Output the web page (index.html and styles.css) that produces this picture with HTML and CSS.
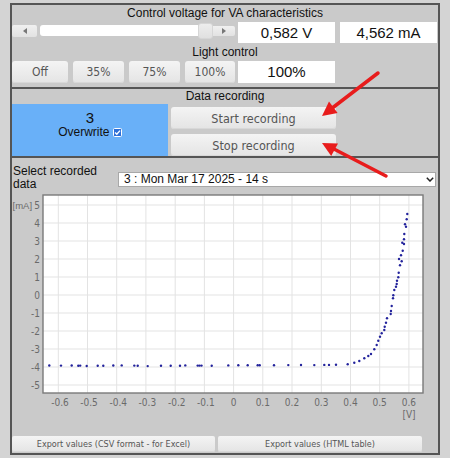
FILE: index.html
```html
<!DOCTYPE html>
<html>
<head>
<meta charset="utf-8">
<title>VA characteristics</title>
<link rel="stylesheet" href="styles.css">
</head>
<body>
<div class="app">
  <section class="panel p1">
    <div class="ptitle">Control voltage for VA characteristics</div>
    <div class="row r1">
      <div class="slider">
        <span class="sbtn sl"><svg width="4" height="6" viewBox="0 0 4 6"><path d="M4 0 L0 3 L4 6 Z" fill="#777"/></svg></span>
        <span class="track"></span>
        <span class="thumb"></span>
        <span class="sbtn sr"><svg width="4" height="6" viewBox="0 0 4 6"><path d="M0 0 L4 3 L0 6 Z" fill="#777"/></svg></span>
      </div>
      <div class="val v1">0,582 V</div>
      <div class="val v2">4,562 mA</div>
    </div>
    <div class="ptitle t2">Light control</div>
    <div class="row r2">
      <button class="btn lb w56">Off</button>
      <button class="btn lb w51">35%</button>
      <button class="btn lb w51">75%</button>
      <button class="btn lb w50">100%</button>
      <div class="val v3">100%</div>
    </div>
  </section>

  <section class="panel p2">
    <div class="ptitle t3">Data recording</div>
    <div class="rec">
      <div class="count">
        <div class="num">3</div>
        <div class="ow">Overwrite <svg class="cb" width="9" height="9" viewBox="0 0 9 9"><rect x="0.5" y="0.5" width="8" height="8" rx="1" fill="#2d6fd8" stroke="#ffffff"/><path d="M2 4.6 L3.8 6.3 L7 2.6" fill="none" stroke="#ffffff" stroke-width="1.4"/></svg></div>
      </div>
      <div class="recbtns">
        <button class="btn rb">Start recording</button>
        <button class="btn rb">Stop recording</button>
      </div>
    </div>
  </section>

  <section class="panel p3">
    <div class="selrow">
      <label class="sellabel" for="rec">Select recorded data</label>
      <div class="selwrap">
        <select id="rec" class="sel"><option>3 : Mon Mar 17 2025 - 14 s</option></select>
        <svg class="chev" width="8" height="5" viewBox="0 0 8 5"><path d="M0.8 0.8 L4 4 L7.2 0.8" fill="none" stroke="#222" stroke-width="1.5"/></svg>
      </div>
    </div>
    <svg class="chart" width="426" height="244" viewBox="12 191 426 244">
      <rect x="43" y="195" width="380" height="198" fill="#ffffff"/>
      <g stroke="#e3e3e3" stroke-width="1">
        <line x1="58.3" y1="195" x2="58.3" y2="393"/>
        <line x1="87.5" y1="195" x2="87.5" y2="393"/>
        <line x1="116.7" y1="195" x2="116.7" y2="393"/>
        <line x1="145.9" y1="195" x2="145.9" y2="393"/>
        <line x1="175.2" y1="195" x2="175.2" y2="393"/>
        <line x1="204.4" y1="195" x2="204.4" y2="393"/>
        <line x1="233.6" y1="195" x2="233.6" y2="393"/>
        <line x1="262.8" y1="195" x2="262.8" y2="393"/>
        <line x1="292" y1="195" x2="292" y2="393"/>
        <line x1="321.3" y1="195" x2="321.3" y2="393"/>
        <line x1="350.5" y1="195" x2="350.5" y2="393"/>
        <line x1="379.7" y1="195" x2="379.7" y2="393"/>
        <line x1="408.9" y1="195" x2="408.9" y2="393"/>
        <line x1="43" y1="205" x2="423" y2="205"/>
        <line x1="43" y1="223" x2="423" y2="223"/>
        <line x1="43" y1="241" x2="423" y2="241"/>
        <line x1="43" y1="259" x2="423" y2="259"/>
        <line x1="43" y1="277" x2="423" y2="277"/>
        <line x1="43" y1="295" x2="423" y2="295"/>
        <line x1="43" y1="313" x2="423" y2="313"/>
        <line x1="43" y1="331" x2="423" y2="331"/>
        <line x1="43" y1="349" x2="423" y2="349"/>
        <line x1="43" y1="367" x2="423" y2="367"/>
        <line x1="43" y1="385" x2="423" y2="385"/>
      </g>
      <rect x="43" y="195" width="380" height="198" fill="none" stroke="#7a7a7a" stroke-width="1.4"/>
      <text class="unit" x="12.5" y="209">[mA]</text>
      <g class="ylab" text-anchor="end">
        <text x="40" y="209">5</text>
        <text x="40" y="227">4</text>
        <text x="40" y="245">3</text>
        <text x="40" y="263">2</text>
        <text x="40" y="281">1</text>
        <text x="40" y="299">0</text>
        <text x="40" y="317">-1</text>
        <text x="40" y="335">-2</text>
        <text x="40" y="353">-3</text>
        <text x="40" y="371">-4</text>
        <text x="40" y="389">-5</text>
      </g>
      <g class="xlab" text-anchor="middle">
        <text x="60" y="406">-0.6</text>
        <text x="89" y="406">-0.5</text>
        <text x="118.2" y="406">-0.4</text>
        <text x="147.4" y="406">-0.3</text>
        <text x="176.7" y="406">-0.2</text>
        <text x="205.9" y="406">-0.1</text>
        <text x="233.6" y="406">0</text>
        <text x="262.8" y="406">0.1</text>
        <text x="292" y="406">0.2</text>
        <text x="321.3" y="406">0.3</text>
        <text x="350.5" y="406">0.4</text>
        <text x="379.7" y="406">0.5</text>
        <text x="408.9" y="406">0.6</text>
        <text x="409" y="418">[V]</text>
      </g>
      <g fill="#23239c">
        <circle cx="49.3" cy="365.5" r="1.2"/>
        <circle cx="61" cy="365.6" r="1.2"/>
        <circle cx="71.7" cy="365.5" r="1.2"/>
        <circle cx="78.3" cy="365.8" r="1.2"/>
        <circle cx="80.2" cy="365.6" r="1.2"/>
        <circle cx="86.7" cy="366" r="1.2"/>
        <circle cx="97.7" cy="365.8" r="1.2"/>
        <circle cx="103.3" cy="365.7" r="1.2"/>
        <circle cx="113.3" cy="365.5" r="1.2"/>
        <circle cx="121.7" cy="365.4" r="1.2"/>
        <circle cx="134.3" cy="365.6" r="1.2"/>
        <circle cx="137.7" cy="365.8" r="1.2"/>
        <circle cx="147.7" cy="366.1" r="1.2"/>
        <circle cx="161" cy="365.7" r="1.2"/>
        <circle cx="170.7" cy="365.7" r="1.2"/>
        <circle cx="180" cy="365.8" r="1.2"/>
        <circle cx="185.3" cy="365.4" r="1.2"/>
        <circle cx="197.7" cy="365.6" r="1.2"/>
        <circle cx="199.5" cy="365.6" r="1.2"/>
        <circle cx="201.5" cy="365.6" r="1.2"/>
        <circle cx="211.7" cy="365.7" r="1.2"/>
        <circle cx="228.3" cy="365.4" r="1.2"/>
        <circle cx="238.3" cy="365.2" r="1.2"/>
        <circle cx="247.7" cy="365.3" r="1.2"/>
        <circle cx="257.7" cy="365.2" r="1.2"/>
        <circle cx="259.7" cy="365.2" r="1.2"/>
        <circle cx="274" cy="365.3" r="1.2"/>
        <circle cx="288.3" cy="365.1" r="1.2"/>
        <circle cx="301" cy="365" r="1.2"/>
        <circle cx="314.3" cy="365.1" r="1.2"/>
        <circle cx="324.3" cy="364.9" r="1.2"/>
        <circle cx="329" cy="364.9" r="1.2"/>
        <circle cx="336" cy="364.7" r="1.2"/>
        <circle cx="347.7" cy="364.3" r="1.2"/>
        <circle cx="354.3" cy="362.7" r="1.2"/>
        <circle cx="359.3" cy="361" r="1.2"/>
        <circle cx="364.3" cy="358.3" r="1.2"/>
        <circle cx="368.3" cy="356" r="1.2"/>
        <circle cx="371" cy="354" r="1.2"/>
        <circle cx="374.3" cy="349.3" r="1.2"/>
        <circle cx="376.7" cy="345" r="1.2"/>
        <circle cx="378.3" cy="340.7" r="1.2"/>
        <circle cx="380" cy="336.7" r="1.2"/>
        <circle cx="381.7" cy="333.3" r="1.2"/>
        <circle cx="384.3" cy="330" r="1.2"/>
        <circle cx="384.7" cy="326.7" r="1.2"/>
        <circle cx="386" cy="322.7" r="1.2"/>
        <circle cx="387" cy="318.3" r="1.2"/>
        <circle cx="390.7" cy="314" r="1.2"/>
        <circle cx="391" cy="311" r="1.2"/>
        <circle cx="391.7" cy="306" r="1.2"/>
        <circle cx="393" cy="298.3" r="1.2"/>
        <circle cx="393.3" cy="295.3" r="1.2"/>
        <circle cx="394.3" cy="290" r="1.2"/>
        <circle cx="396" cy="286.7" r="1.2"/>
        <circle cx="396.7" cy="284" r="1.2"/>
        <circle cx="397" cy="280.7" r="1.2"/>
        <circle cx="398.3" cy="277.3" r="1.2"/>
        <circle cx="398.7" cy="272.7" r="1.2"/>
        <circle cx="400" cy="265.3" r="1.2"/>
        <circle cx="401.7" cy="261.3" r="1.2"/>
        <circle cx="399" cy="259" r="1.2"/>
        <circle cx="401" cy="255.3" r="1.2"/>
        <circle cx="402.7" cy="250.7" r="1.2"/>
        <circle cx="404" cy="244" r="1.2"/>
        <circle cx="402.3" cy="242.7" r="1.2"/>
        <circle cx="404" cy="239.3" r="1.2"/>
        <circle cx="404.3" cy="234" r="1.2"/>
        <circle cx="406" cy="226.7" r="1.2"/>
        <circle cx="405" cy="224.3" r="1.2"/>
        <circle cx="406.7" cy="219.3" r="1.2"/>
        <circle cx="407.3" cy="214" r="1.2"/>
      </g>
    </svg>
    <div class="exports">
      <button class="btn ex e1">Export values (CSV format - for Excel)</button>
      <button class="btn ex e2">Export values (HTML table)</button>
    </div>
  </section>
</div>
<svg class="arrows" width="450" height="458" viewBox="0 0 450 458">
  <g stroke="#e81c1c" stroke-width="3.5" stroke-linecap="round" fill="#e81c1c">
    <line x1="378" y1="73" x2="331" y2="109"/>
    <line x1="386" y1="176" x2="332" y2="148"/>
  </g>
  <g fill="#e81c1c">
    <polygon points="322,116 337.6,113 329,101.6"/>
    <polygon points="322,143 338,143.5 331.2,156"/>
  </g>
</svg>
</body>
</html>
```

FILE: styles.css
```css
html, body {
  margin: 0;
  padding: 0;
}

body {
  background: #d4d4d4;
  font-family: "Liberation Sans", Arial, sans-serif;
  font-size: 12px;
  color: #111;
  width: 450px;
  height: 458px;
  overflow: hidden;
}

.app {
  margin: 3px 0 0 10px;
  width: 430px;
}

.panel {
  box-sizing: border-box;
  width: 430px;
  background: #cacaca;
  border: 2px solid #555;
  border-bottom: none;
}

.p3 {
  border-bottom: 2px solid #555;
}

.ptitle {
  text-align: center;
  font-size: 12px;
  height: 16px;
  line-height: 16px;
}

.t2 {
  margin-top: 1px;
}

.t3 {
  height: 15px;
  line-height: 15px;
}

.p1 {
  padding-bottom: 4px;
}

.row {
  display: flex;
  margin-top: 1px;
}

.r1 {
  height: 21px;
}

.r2 {
  height: 22px;
}

.slider {
  display: flex;
  align-items: center;
  width: 223px;
  height: 17px;
  margin-right: 3px;
}

.sbtn {
  display: flex;
  align-items: center;
  justify-content: center;
  background: linear-gradient(#f0f0f0, #e2e2e2);
  border-radius: 2px;
}

.sl {
  width: 25px;
  height: 12px;
  margin-right: 3px;
}

.sr {
  width: 22px;
  height: 10px;
  border-radius: 0 2px 2px 0;
}

.track {
  flex: 1;
  height: 11px;
  background: #ffffff;
  border-radius: 3px 0 0 3px;
}

.thumb {
  box-sizing: border-box;
  width: 15px;
  height: 16px;
  background: linear-gradient(#ededed, #e0e0e0);
  border: 1px solid #d6d6d6;
  border-radius: 3px;
}

.val {
  box-sizing: border-box;
  width: 97px;
  background: #ffffff;
  text-align: center;
  font-size: 15px;
  color: #111;
}

.r1 .val {
  height: 21px;
  line-height: 21px;
}

.v2 {
  margin-left: 5px;
}

.v3 {
  height: 22px;
  line-height: 22px;
  margin-left: 3px;
}

.btn {
  font-family: "DejaVu Sans Condensed", "Liberation Sans", sans-serif;
  border: none;
  border-radius: 3px;
  background: linear-gradient(#f4f4f4, #e4e4e4);
  box-shadow: inset 0 -1px 0 #d8d8d8;
  color: #555;
  padding: 0;
  margin: 0;
  cursor: pointer;
}

.lb {
  height: 22px;
  font-size: 12px;
  margin-right: 5px;
}

.lb.w50 {
  margin-right: 0;
}

.w56 { width: 56px; }
.w51 { width: 51px; }
.w50 { width: 50px; }

.rec {
  display: flex;
  height: 52px;
}

.count {
  box-sizing: border-box;
  width: 156px;
  background: #69b0f8;
  text-align: center;
  padding-top: 5px;
}

.num {
  font-size: 15px;
  line-height: 17px;
}

.ow {
  font-size: 12px;
  line-height: 13px;
}

.cb {
  vertical-align: -1px;
}

.recbtns {
  display: flex;
  flex-direction: column;
  gap: 5px;
  margin-left: 3px;
  padding-top: 3px;
}

.rb {
  width: 165px;
  height: 22px;
  font-size: 12.5px;
}

.selrow {
  display: flex;
  align-items: flex-start;
  height: 26px;
  padding: 7px 0 0 1px;
}

.sellabel {
  width: 105px;
  font-size: 12px;
  line-height: 13px;
}

.selwrap {
  position: relative;
  margin-top: 7px;
}

.sel {
  appearance: none;
  -webkit-appearance: none;
  box-sizing: border-box;
  display: block;
  width: 318px;
  height: 15px;
  margin: 0;
  padding: 0 0 0 5px;
  border: 1px solid #a8a8a8;
  border-radius: 0;
  background: #ffffff;
  font-family: "Liberation Sans", Arial, sans-serif;
  font-size: 12px;
  line-height: 13px;
  color: #111;
}

.chev {
  position: absolute;
  left: 308px;
  top: 5px;
}

.chart {
  display: block;
  overflow: visible;
}

.ylab text,
.xlab text {
  font-family: "DejaVu Sans Condensed", "Liberation Sans", sans-serif;
  font-size: 10px;
  fill: #6a6a6a;
}

.unit {
  font-family: "Liberation Sans", Arial, sans-serif;
  font-size: 9.5px;
  fill: #6a6a6a;
}

.exports {
  display: flex;
  gap: 3px;
  height: 16px;
  margin-top: 1px;
  padding-bottom: 1px;
}

.ex {
  height: 16px;
  font-size: 9px;
  border-radius: 2px;
}

.e1 { width: 203px; }
.e2 { width: 204px; }

.arrows {
  position: absolute;
  left: 0;
  top: 0;
  pointer-events: none;
}
```
